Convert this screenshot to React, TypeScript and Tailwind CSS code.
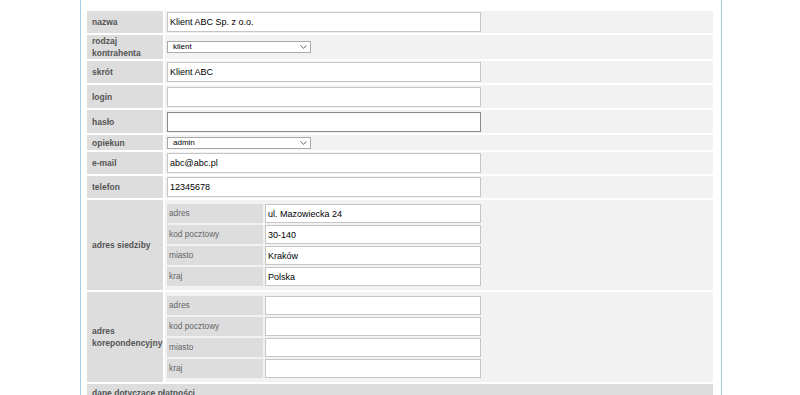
import React from "react";

type Field = {
  label: string;
  value?: string;
  kind?: "text" | "select" | "password";
  tall?: boolean;
};

const fields: Field[] = [
  { label: "nazwa", value: "Klient ABC Sp. z o.o." },
  { label: "rodzaj kontrahenta", value: "klient", kind: "select" },
  { label: "skrót", value: "Klient ABC" },
  { label: "login", value: "", tall: true },
  { label: "hasło", value: "", kind: "password", tall: true },
  { label: "opiekun", value: "admin", kind: "select" },
  { label: "e-mail", value: "abc@abc.pl" },
  { label: "telefon", value: "12345678" },
];

const addressParts = ["adres", "kod pocztowy", "miasto", "kraj"];

function SelectBox({ value }: { value: string }) {
  return (
    <div className="relative h-[12px] w-[144px]">
      <select
        defaultValue={value}
        className="block h-[12px] w-full appearance-none border border-[#a9a9a9] bg-white py-0 pl-[5px] text-[8px] leading-[10px] text-black outline-none"
      >
        <option>{value}</option>
      </select>
      <svg
        className="pointer-events-none absolute right-[4px] top-[4px]"
        width="7"
        height="4"
        viewBox="0 0 7 4"
        fill="none"
      >
        <path d="M0.5 0.5 L3.5 3.3 L6.5 0.5" stroke="#555" strokeWidth="0.9" />
      </svg>
    </div>
  );
}

function TextBox({ value, dark, h = "h-[20px]", w = "w-[314px]" }: { value: string; dark?: boolean; h?: string; w?: string }) {
  return (
    <input
      readOnly
      value={value}
      className={`${h} ${w} border bg-white px-[2px] text-[9px] text-black outline-none ${
        dark ? "border-[#8a8a8a]" : "border-[#c6c6c6]"
      }`}
    />
  );
}

function AddressBlock({ label, values }: { label: string; values: string[] }) {
  return (
    <div className="flex h-full gap-[2px]">
      <div className="flex w-[76px] items-center bg-[#dddddd] px-[5px] text-[8.5px] font-bold leading-[12px] text-[#555]">
        {label}
      </div>
      <div className="flex flex-1 flex-col gap-[2px] bg-[#f2f2f2] py-[4px] pl-[2px]">
        {addressParts.map((part, i) => (
          <div key={part} className="flex h-[19px] gap-[2px]">
            <div className="flex w-[96px] items-center bg-[#dddddd] pl-[2px] text-[8.3px] text-[#666]">
              {part}
            </div>
            <TextBox value={values[i]} h="h-[19px]" w="w-[216px]" />
          </div>
        ))}
      </div>
    </div>
  );
}

export default function App() {
  return (
    <div className="h-[395px] overflow-hidden bg-white font-['Liberation_Sans',Arial,sans-serif]">
      <div className="ml-[80px] h-[395px] w-[642px] border-x border-[#a6cfe9] pl-[6px] pr-[8px] pt-[11px]">
        <div className="flex flex-col gap-[2px]">
          {fields.map((f) => (
            <div
              key={f.label}
              className={`flex gap-[2px] ${
                f.kind === "select" ? (f.label === "opiekun" ? "h-[15px]" : "h-[24px]") : f.tall ? "h-[23px]" : "h-[22px]"
              }`}
            >
              <div className="flex w-[76px] items-center bg-[#dddddd] px-[5px] text-[8.5px] font-bold leading-[12px] text-[#555]">
                {f.label}
              </div>
              <div className="flex flex-1 items-center bg-[#f2f2f2] pl-[2px]">
                {f.kind === "select" ? (
                  <SelectBox value={f.value ?? ""} />
                ) : (
                  <TextBox value={f.value ?? ""} dark={f.kind === "password"} />
                )}
              </div>
            </div>
          ))}
          <div className="h-[90px]">
            <AddressBlock label="adres siedziby" values={["ul. Mazowiecka 24", "30-140", "Kraków", "Polska"]} />
          </div>
          <div className="h-[90px]">
            <AddressBlock label="adres korepondencyjny" values={["", "", "", ""]} />
          </div>
          <div className="h-[22px] bg-[#dddddd] px-[5px] pt-[3px] text-[8.5px] font-bold leading-[12px] text-[#555]">
            dane dotyczące płatności
          </div>
        </div>
      </div>
    </div>
  );
}
